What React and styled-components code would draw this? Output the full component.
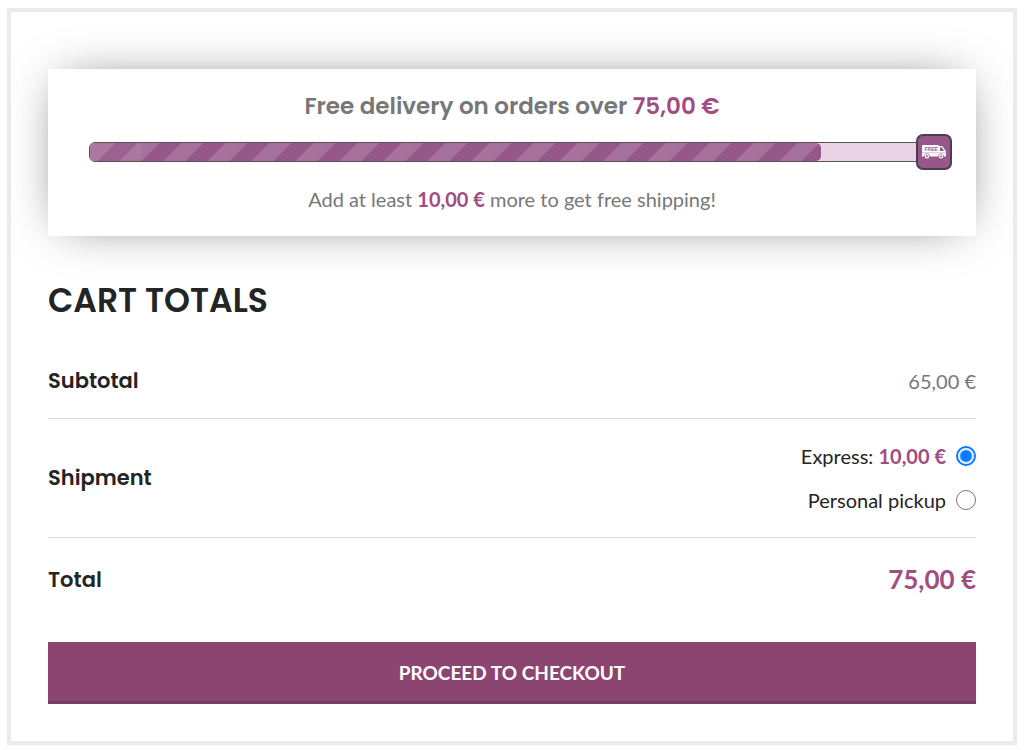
import React, { useState } from "react";
import styled, { createGlobalStyle } from "styled-components";

const GlobalStyle = createGlobalStyle`
  * {
    box-sizing: border-box;
  }

  body {
    margin: 0;
    background: #fff;
    color: #242424;
    font-family: Lato, "Liberation Sans", sans-serif;
    font-size: 20px;
    line-height: 28px;
  }
`;

const headingFont = `Poppins, Inter, "Liberation Sans", sans-serif`;

const Page = styled.main`
  margin: 8px 7px 5px;
  padding: 57px 37px 37px;
  border: 4px solid #ebebeb;
`;

const DeliveryBox = styled.section`
  padding: 21px 41px 23px;
  background: #fff;
  box-shadow: 0 0 50px -15px rgba(0, 0, 0, 0.6);
  color: #777;
  text-align: center;
`;

const DeliveryTitle = styled.h3`
  margin: 0 0 20px;
  font-family: ${headingFont};
  font-size: 23px;
  font-weight: 600;
  line-height: 32px;
`;

const DeliveryNote = styled.p`
  margin: 23px 0 0;
`;

const Price = styled.strong`
  color: #a24d81;
  font-size: ${props => (props.$large ? "26px" : "inherit")};
  font-weight: ${props => (props.$semi ? 600 : 700)};
`;

const Track = styled.div`
  position: relative;
  height: 20px;
  border: 1px solid #5b4f57;
  border-radius: 6px;
  background: #ebd3e6;
`;

const Fill = styled.div`
  position: relative;
  overflow: hidden;
  height: 100%;
  border-radius: 5px;
  background-color: #96588a;
  background-image: linear-gradient(
    -45deg,
    rgba(255, 255, 255, 0.15) 25%,
    transparent 25%,
    transparent 50%,
    rgba(255, 255, 255, 0.15) 50%,
    rgba(255, 255, 255, 0.15) 75%,
    transparent 75%
  );
  background-position: 25px 0;
  background-size: 44px 44px;
`;

const Shine = styled.div`
  width: 52px;
  height: 100%;
  border-radius: 5px;
  background: rgba(255, 255, 255, 0.06);
`;

const Badge = styled.span`
  position: absolute;
  top: -9px;
  right: -18px;
  display: flex;
  align-items: center;
  justify-content: center;
  width: 36px;
  height: 36px;
  border: 2px solid #4d3c4a;
  border-radius: 7px;
  background: #96588a;
`;

const Title = styled.h2`
  margin: 43px 0 21px;
  font-family: ${headingFont};
  font-size: 33px;
  font-weight: 600;
  line-height: 44px;
`;

const Totals = styled.table`
  width: 100%;
  border-collapse: collapse;
`;

const Label = styled.th`
  padding: 23px 0;
  font-family: ${headingFont};
  font-size: 21px;
  font-weight: 600;
  text-align: left;
`;

const Value = styled.td`
  padding: 23px 0;
  color: #777;
  text-align: right;
`;

const Row = styled.tr`
  border-bottom: 1px solid #dedede;

  &:last-child {
    border-bottom: none;
  }

  &:last-child > * {
    padding: 27px 0;
  }
`;

const Methods = styled.div`
  display: flex;
  flex-direction: column;
  align-items: flex-end;
  gap: 16px;
`;

const Method = styled.label`
  display: flex;
  align-items: center;
  gap: 10px;
  color: #242424;
`;

const Radio = styled.input`
  appearance: none;
  width: 20px;
  height: 20px;
  margin: 0;
  border: 1px solid #767676;
  border-radius: 50%;
  background: #fff;

  &:checked {
    border: 2px solid #0a7aff;
    background: radial-gradient(circle, #0a7aff 5px, #fff 7px);
  }
`;

const Checkout = styled.button`
  display: block;
  width: 100%;
  margin-top: 20px;
  padding: 17px 20px 14px;
  border: 0;
  border-bottom: 3px solid #753a5d;
  background: #8c4570;
  color: #fff;
  font: inherit;
  font-size: 19px;
  font-weight: 700;
  line-height: 28px;
  text-transform: uppercase;
  cursor: pointer;
`;

const Truck = () => (
  <svg width="24" height="14" viewBox="0 0 24 14" aria-hidden="true">
    <path
      d="M1 0h15.500v1H19q1.400 0 2.100 1l1.900 3q1 .5 1 1.600V10.500q0 1-1 1H0V1q0-1 1-1z"
      fill="#fff"
    />
    <path d="M18 2.200h1.200q.6 0 1 .6l1.800 3.200h-4z" fill="#96588a" />
    <path d="M0 7.800h24" stroke="#96588a" strokeWidth="0.4" />
    <circle cx="5" cy="11.300" r="2.700" fill="#96588a" />
    <circle cx="19" cy="11.300" r="2.700" fill="#96588a" />
    <circle cx="5" cy="11.300" r="1.600" fill="#96588a" stroke="#fff" strokeWidth="1.200" />
    <circle cx="19" cy="11.300" r="1.600" fill="#96588a" stroke="#fff" strokeWidth="1.200" />
    <text
      x="2.500"
      y="5.900"
      fill="#96588a"
      fontFamily="Liberation Sans, sans-serif"
      fontSize="5"
      fontStyle="italic"
      fontWeight="700"
    >
      FREE
    </text>
  </svg>
);

const methods = [
  { id: "express", label: "Express:", price: "10,00 €" },
  { id: "pickup", label: "Personal pickup" }
];

const subtotal = 65;
const freeFrom = 75;

const App = () => {
  const [method, setMethod] = useState("express");

  return (
    <>
      <GlobalStyle />
      <Page>
        {/* free delivery progress */}
        <DeliveryBox>
          <DeliveryTitle>
            Free delivery on orders over <Price $semi>75,00 €</Price>
          </DeliveryTitle>
          <Track>
            <Fill style={{ width: `${(subtotal / freeFrom) * 100}%` }}>
              <Shine />
            </Fill>
            <Badge>
              <Truck />
            </Badge>
          </Track>
          <DeliveryNote>
            Add at least <Price>10,00 €</Price> more to get free shipping!
          </DeliveryNote>
        </DeliveryBox>

        {/* totals */}
        <Title>CART TOTALS</Title>
        <Totals>
          <tbody>
            <Row>
              <Label scope="row">Subtotal</Label>
              <Value>65,00 €</Value>
            </Row>
            <Row>
              <Label scope="row">Shipment</Label>
              <Value>
                <Methods>
                  {methods.map(item => (
                    <Method key={item.id} htmlFor={item.id}>
                      <span>
                        {item.label} {item.price && <Price>{item.price}</Price>}
                      </span>
                      <Radio
                        type="radio"
                        name="shipment"
                        id={item.id}
                        checked={method === item.id}
                        onChange={() => setMethod(item.id)}
                      />
                    </Method>
                  ))}
                </Methods>
              </Value>
            </Row>
            <Row>
              <Label scope="row">Total</Label>
              <Value>
                <Price $large>75,00 €</Price>
              </Value>
            </Row>
          </tbody>
        </Totals>

        <Checkout type="button">Proceed to checkout</Checkout>
      </Page>
    </>
  );
};

export default App;
